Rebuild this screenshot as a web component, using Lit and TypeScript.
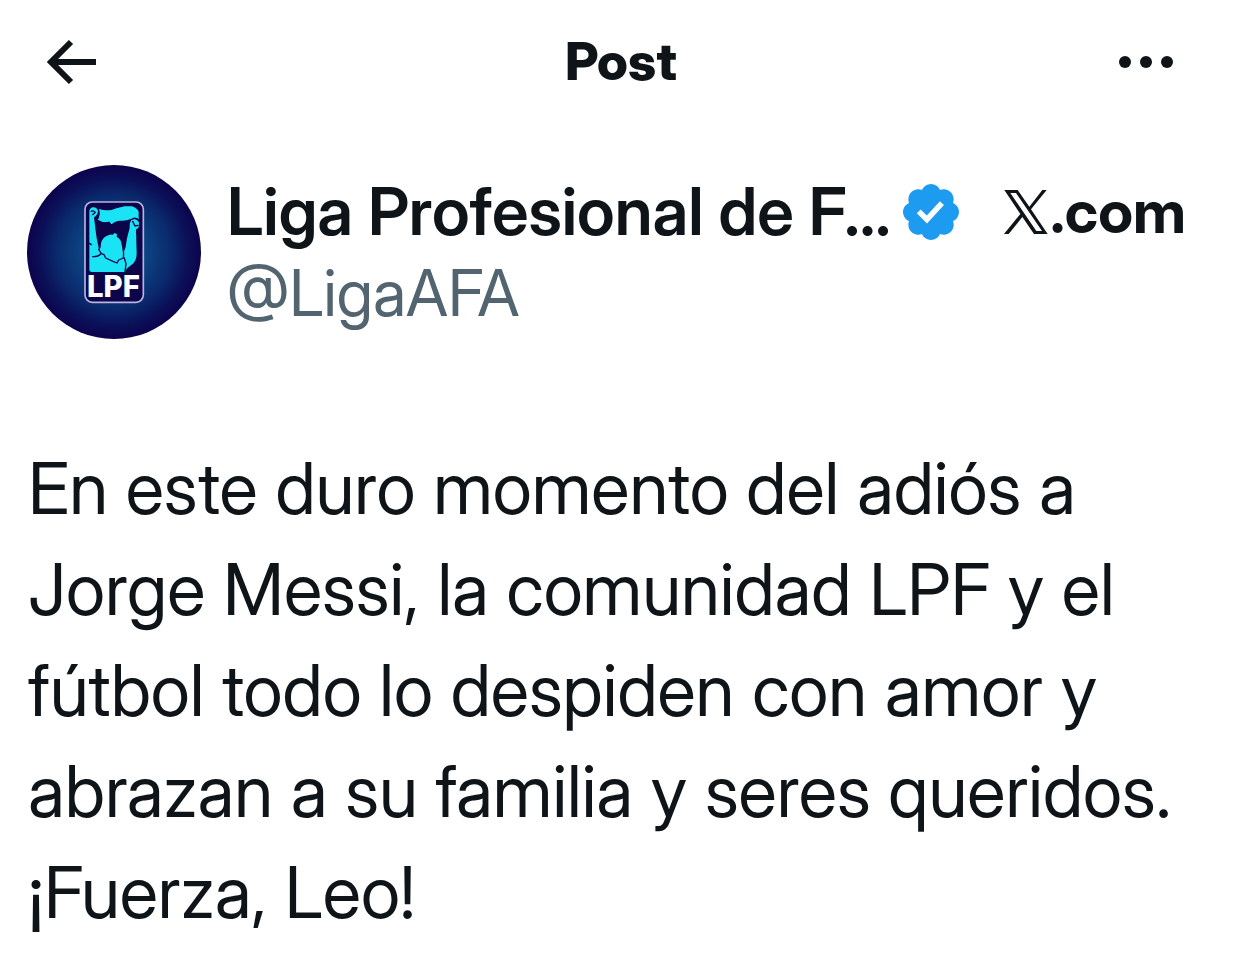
import { LitElement, html, css } from "lit";
import { customElement, property } from "lit/decorators.js";

@customElement("league-avatar")
class LeagueAvatar extends LitElement {
  static styles = css`
    :host { display: block; flex: none; width: 174px; height: 174px; border-radius: 50%; overflow: hidden; }
    .art { display: block; width: 100%; height: 100%; }
    .letters { font-family: Inter, "Liberation Sans", sans-serif; font-weight: 800; font-size: 88px; fill: #fff; }
  `;
  render() {
    return html`
      <svg class="art" viewBox="21 15 522 522" role="img" aria-label="LPF">
        <defs>
          <radialGradient id="glow" gradientUnits="userSpaceOnUse" cx="282" cy="276" r="262">
            <stop offset="0" stop-color="#0d5592" />
            <stop offset="0.4" stop-color="#0b4180" />
            <stop offset="0.65" stop-color="#0a2a6c" />
            <stop offset="0.85" stop-color="#0b1058" />
            <stop offset="1" stop-color="#0c034c" />
          </radialGradient>
        </defs>
        <rect x="21" y="15" width="522" height="522" fill="url(#glow)" />
        <rect x="195" y="126" width="175" height="301" rx="22" fill="#0d0549" stroke="#b9b3e2" stroke-width="5" />
        <path fill="#1be3f6" d="M208 328 V154 Q209 143 220 142 Q232 141 234 152 Q234 164 222 172 L226 205 Q229 235 236 264 Q238 274 242 262 Q242 238 258 229 Q270 222 279 224 L283 219 L291 222 L290 230 Q304 238 305 254 L308 272 L309 284 Q319 262 321 235 L329 204 Q328 188 334 180 Q349 172 357 186 L356 202 L348 209 L350 280 Q350 300 338 312 L325 322 Q318 326 316 336 H216 Q208 336 208 328 Z" />
        <path fill="#1be3f6" stroke="#0d0549" stroke-width="4" d="M222 138 Q244 152 274 148 Q304 137 325 136 Q350 136 358 154 V184 Q349 170 337 177 Q318 186 299 184 Q283 186 274 196 L267 187 Q250 192 231 180 Q240 166 236 150 Q231 142 222 138 Z" />
        <path fill="none" stroke="#0d0549" stroke-width="4" stroke-linejoin="round" stroke-linecap="round" d="M214 154 Q220 150 226 157 L218 164 M338 184 L345 198 L354 196 M236 268 L244 281 L252 284 L257 294 L279 304 L291 309 L296 300 L310 294 L311 279 M243 281 Q233 291 218 290 M313 294 L318 311 L315 336 M208 250 L214 254" />
        <text class="letters" x="201" y="411">LPF</text>
      </svg>
    `;
  }
}

@customElement("post-header")
class PostHeader extends LitElement {
  @property() heading = "";
  static styles = css`
    :host { display: grid; grid-template-columns: 1fr auto 1fr; align-items: center; height: 124px; padding: 0 44px; }
    .title { margin: 0; font-size: 52px; line-height: 60px; font-weight: 800; }
    .tool { display: flex; padding: 0; border: 0; background: none; color: inherit; cursor: pointer; }
    .end { justify-self: end; padding-right: 20px; }
    .back { width: 56px; height: 48px; }
    .more { width: 64px; height: 48px; }
  `;
  render() {
    return html`
      <button class="tool" aria-label="Back">
        <svg class="back" viewBox="0 0 56 48" fill="none" stroke="currentColor" stroke-width="6">
          <path d="M27 4 L7 24 L27 44 M7 24 H52" />
        </svg>
      </button>
      <h1 class="title">${this.heading}</h1>
      <button class="tool end" aria-label="More">
        <svg class="more" viewBox="0 0 64 48" fill="currentColor">
          <circle cx="11" cy="24" r="6" /><circle cx="32" cy="24" r="6" /><circle cx="53" cy="24" r="6" />
        </svg>
      </button>
    `;
  }
}

@customElement("post-author")
class PostAuthor extends LitElement {
  @property() name = "";
  @property() handle = "";
  static styles = css`
    :host { display: flex; align-items: center; gap: 26px; padding: 41px 56px 0 27px; }
    .info { flex: 1; min-width: 0; }
    .line { display: flex; align-items: center; }
    .name, .handle, .site { line-height: 81px; white-space: nowrap; color: inherit; text-decoration: none; }
    .name { font-size: 66px; font-weight: 600; }
    .handle { display: block; font-size: 64px; color: #536471; }
    .badge { flex: none; width: 56px; height: 56px; margin-left: 12px; fill: #1d9bf0; }
    .site { display: flex; align-items: center; margin-left: auto; font-size: 60px; font-weight: 700; }
    .x { width: 44px; height: 44px; margin-right: 2px; }
  `;
  render() {
    return html`
      <league-avatar></league-avatar>
      <div class="info">
        <div class="line">
          <a class="name" href="#">${this.name}</a>
          <svg class="badge" viewBox="1.6 1.6 18.8 18.8" role="img" aria-label="Verified">
            <path d="M20.396 11c-.018-.646-.215-1.275-.57-1.816-.354-.54-.852-.972-1.438-1.246.223-.607.27-1.264.14-1.897-.131-.634-.437-1.218-.882-1.687-.47-.445-1.053-.75-1.687-.882-.633-.13-1.29-.083-1.897.14-.273-.587-.704-1.086-1.245-1.44S11.647 1.62 11 1.604c-.646.017-1.273.213-1.813.568s-.969.854-1.24 1.44c-.608-.223-1.267-.272-1.902-.14-.635.13-1.22.436-1.69.882-.445.47-.749 1.055-.878 1.688-.13.633-.08 1.29.144 1.896-.587.274-1.087.705-1.443 1.245-.356.54-.555 1.17-.574 1.817.02.647.218 1.276.574 1.817.356.54.856.972 1.443 1.245-.224.606-.274 1.263-.144 1.896.13.634.433 1.218.877 1.688.47.443 1.054.747 1.687.878.633.132 1.29.084 1.897-.136.274.586.705 1.084 1.246 1.439.54.354 1.17.551 1.816.569.647-.016 1.276-.213 1.817-.567s.972-.854 1.245-1.44c.604.239 1.266.296 1.903.164.636-.132 1.22-.447 1.68-.907.46-.46.776-1.044.908-1.681s.075-1.299-.165-1.903c.586-.274 1.084-.705 1.439-1.246.354-.54.551-1.17.569-1.816zM9.662 14.85l-3.429-3.428 1.293-1.302 2.072 2.072 4.4-4.794 1.347 1.246z" />
          </svg>
          <a class="site" href="#">
            <svg class="x" viewBox="0 0 132 132" role="img" aria-label="X">
              <path fill="currentColor" fill-rule="evenodd" d="M1 0 H41 L76 50 L115 0 H128 L81 58 L131 132 H90 L55 81 L14 132 H0 L49 72 Z M19 9 L97 123 H114 L36 9 Z" />
            </svg>
            <span>.com</span>
          </a>
        </div>
        <a class="handle" href="#">${this.handle}</a>
      </div>
    `;
  }
}

@customElement("app-root")
class AppRoot extends LitElement {
  static styles = css`
    :host { display: block; min-height: 100vh; background: #fff; color: #0f1419; font-family: "Inter Display", Inter, "Liberation Sans", sans-serif; }
    .text { margin: 0; padding: 99px 28px 32px; font-size: 71px; line-height: 101px; }
  `;
  render() {
    return html`
      <post-header heading="Post"></post-header>
      <main>
        <post-author name="Liga Profesional de F..." handle="@LigaAFA"></post-author>
        <p class="text">En este duro momento del adiós a Jorge Messi, la comunidad LPF y el fútbol todo lo despiden con amor y abrazan a su familia y seres queridos. ¡Fuerza, Leo!</p>
      </main>
    `;
  }
}
